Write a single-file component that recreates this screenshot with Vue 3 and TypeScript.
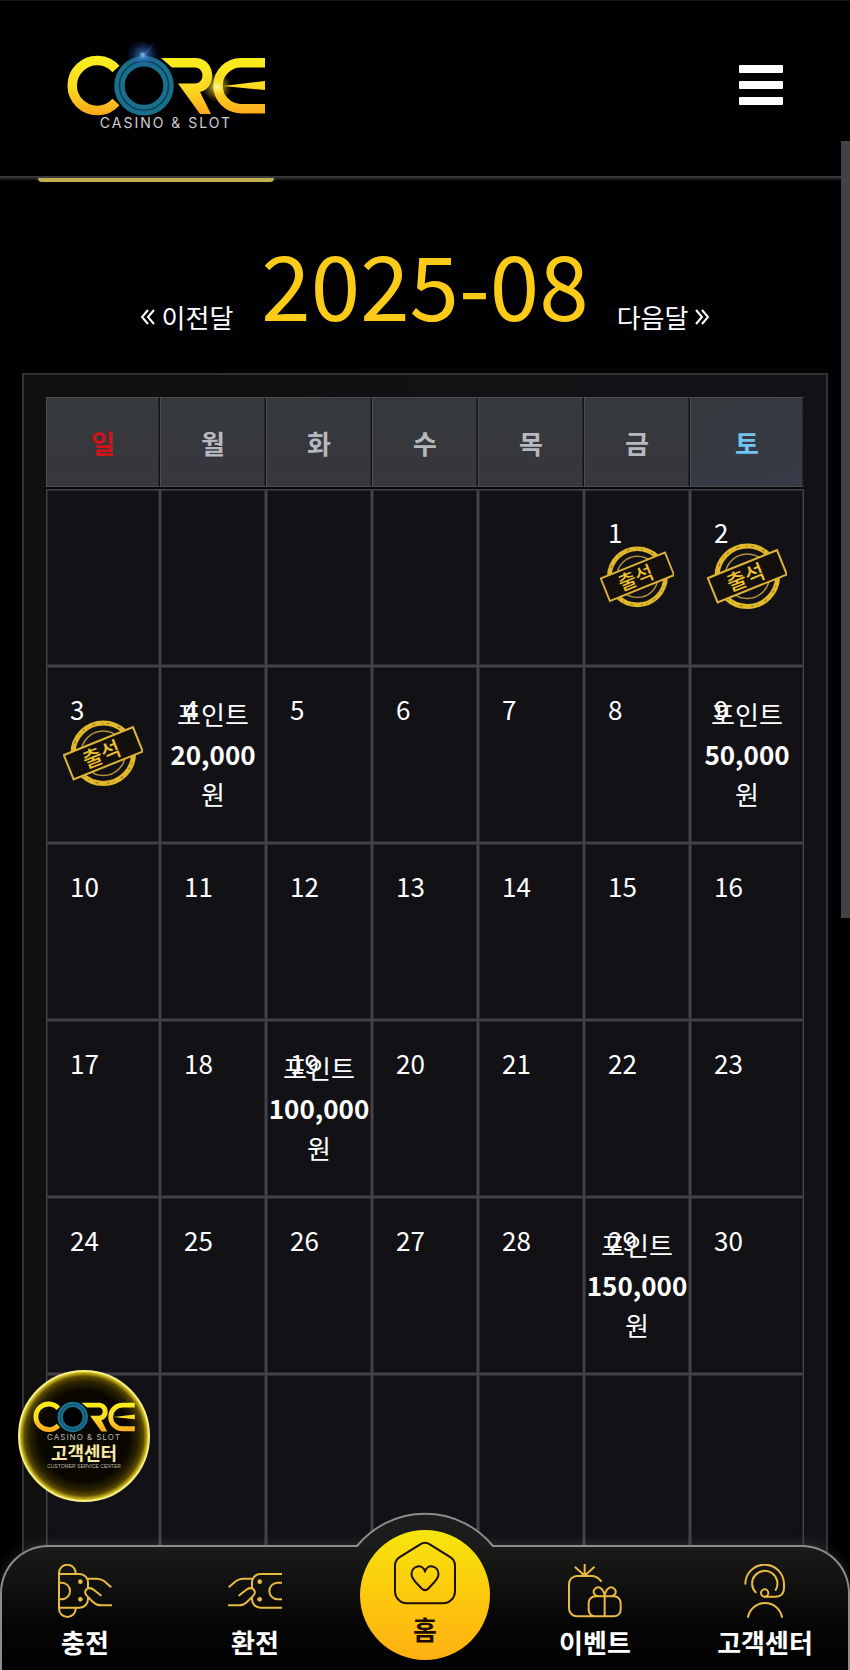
<script setup lang="ts">
interface Day {
  label: string
  stamped?: boolean
  points?: string
}

const weekdays: string[] = ['일', '월', '화', '수', '목', '금', '토']
const stampedDays: number[] = [1, 2, 3]
const pointDays: Record<number, string> = {
  4: '20,000',
  9: '50,000',
  19: '100,000',
  29: '150,000',
}

const firstWeekday = 5
const lastDay = 30

const weeks: Day[][] = Array.from({ length: 6 }, (_, w) =>
  Array.from({ length: 7 }, (_, d) => {
    const n = w * 7 + d - firstWeekday + 1
    if (n < 1 || n > lastDay) return { label: '' }
    return { label: String(n), stamped: stampedDays.includes(n), points: pointDays[n] }
  }),
)
</script>

<template>
  <div class="page">
    <svg class="defs" aria-hidden="true">
      <defs>
        <linearGradient id="gold" x1="0" y1="16" x2="0" y2="74" gradientUnits="userSpaceOnUse">
          <stop offset="0" stop-color="#f9ee1c" />
          <stop offset="0.5" stop-color="#fbdc22" />
          <stop offset="1" stop-color="#fda81c" />
        </linearGradient>
        <radialGradient id="flare">
          <stop offset="0" stop-color="#9fe4ff" />
          <stop offset="0.25" stop-color="#3f7fd0" stop-opacity="0.6" />
          <stop offset="1" stop-color="#143a90" stop-opacity="0" />
        </radialGradient>
        <radialGradient id="spark">
          <stop offset="0" stop-color="#fffbb0" />
          <stop offset="0.4" stop-color="#ffe83a" stop-opacity="0.5" />
          <stop offset="1" stop-color="#d8a800" stop-opacity="0" />
        </radialGradient>
        <symbol id="core-mark" viewBox="0 0 200 76">
          <path d="M50 28A25 25 0 1 0 50 61" fill="none" stroke="url(#gold)" stroke-width="9.500" />
          <path d="M95 17H129C150 17 152 47 134 51L145 73H134L112 42.500H129C139 42.500 139 26.500 129 26.500H106z" fill="url(#gold)" />
          <path d="M199 21.700H175a23 23 0 0 0 0 46H199" fill="none" stroke="url(#gold)" stroke-width="9.500" />
          <path d="M157 45L199 40v9z" fill="url(#gold)" />
          <circle cx="78" cy="44.700" r="31.500" fill="#000" />
          <circle cx="78" cy="44.700" r="24.500" fill="none" stroke="#196f8c" stroke-width="10.500" />
          <circle cx="78" cy="44.700" r="24.500" fill="none" stroke="#0b3f58" stroke-width="1.500" />
        </symbol>
        <symbol id="stamp" viewBox="0 0 80 68">
          <g fill="none" stroke="#e2b82b">
            <circle cx="40" cy="34" r="30" stroke-width="5" />
            <circle cx="40" cy="34" r="30" stroke="#80641a" stroke-width="1" stroke-dasharray="3 7 1 4 2 9" />
            <circle cx="40" cy="34" r="22" stroke-width="1.500" stroke="#b3923a" />
          </g>
          <g transform="rotate(-22 40 34)">
            <rect x="3" y="21" width="74" height="26" fill="#120f0c" stroke="#dcb23a" stroke-width="2" />
            <text x="38" y="42" text-anchor="middle" font-size="21" font-weight="500" fill="#efc22e">출석</text>
          </g>
        </symbol>
      </defs>
    </svg>

    <header class="header">
      <a class="logo" href="#">
        <svg class="logo-mark" viewBox="0 0 200 76" aria-hidden="true">
          <use href="#core-mark" />
          <ellipse cx="77" cy="14" rx="17" ry="15" fill="url(#flare)" />
          <path d="M76 15L89 0L79 16z" fill="#3f66c8" opacity="0.4" />
          <circle cx="151" cy="46" r="15" fill="url(#spark)" />
        </svg>
        <span class="logo-sub">CASINO &amp; SLOT</span>
      </a>
      <button class="menu" type="button" aria-label="메뉴">
        <span></span><span></span><span></span>
      </button>
    </header>

    <main class="content">
      <div class="tab-edge"></div>

      <div class="month">
        <a class="month-link" href="#">
          <svg viewBox="0 0 16 18" aria-hidden="true"><path d="M8 2L2 9l6 7M14 2L8 9l6 7" /></svg>
          이전달
        </a>
        <h1>2025-08</h1>
        <a class="month-link" href="#">
          다음달
          <svg viewBox="0 0 16 18" aria-hidden="true"><path d="M2 2l6 7l-6 7M8 2l6 7l-6 7" /></svg>
        </a>
      </div>

      <section class="frame">
        <table class="calendar">
          <colgroup>
            <col class="col-edge" />
            <col v-for="i in 5" :key="i" />
            <col class="col-edge" />
          </colgroup>
          <thead>
            <tr>
              <th v-for="w in weekdays" :key="w" scope="col">{{ w }}</th>
            </tr>
          </thead>
          <tbody>
            <tr v-for="(week, i) in weeks" :key="i">
              <td v-for="(day, j) in week" :key="j">
                <span class="num">{{ day.label }}</span>
                <div v-if="day.stamped" class="over">
                  <svg class="stamp" viewBox="0 0 80 68"><use href="#stamp" /></svg>
                </div>
                <div v-else-if="day.points" class="over">
                  <span>포인트</span>
                  <strong>{{ day.points }}</strong>
                  <span>원</span>
                </div>
              </td>
            </tr>
          </tbody>
        </table>
      </section>
    </main>

    <div class="scroll-thumb"></div>

    <a class="support" href="#">
      <svg class="support-mark" viewBox="0 0 200 76" aria-hidden="true"><use href="#core-mark" /></svg>
      <span class="support-sub">CASINO &amp; SLOT</span>
      <strong>고객센터</strong>
      <small>CUSTOMER SERVICE CENTER</small>
    </a>

    <nav class="bottom">
      <svg class="bump" viewBox="0 0 140 36" aria-hidden="true">
        <path class="bump-fill" d="M0 36L2 34A88 88 0 0 1 138 34L140 36z" />
        <path class="bump-line" d="M0 34h2A88 88 0 0 1 138 34h2" />
      </svg>
      <a href="#">
        <svg class="icon" viewBox="0 0 162 162" aria-hidden="true">
          <path d="M53 30V27a25 25 0 0 0-50 0V134a25 25 0 0 0 50 0V131M3 30H65a25 25 0 0 1 25 25V72M3 131H65a25 25 0 0 0 25-25V100M5 56h6a25 25 0 0 1 0 50H5M88 44h30q10 0 20 7l20 17M128 94L105 76q-9-6-17-2q-12 9-2 21l19 19q10 10 25 10h30" />
          <circle class="dot" cx="67" cy="53" r="7" /><circle class="dot" cx="67" cy="106" r="7" />
        </svg>
        <span>충전</span>
      </a>
      <a href="#">
        <svg class="icon" viewBox="0 0 162 162" aria-hidden="true">
          <g transform="translate(162 0) scale(-1 1)">
            <path d="M1 30H65a25 25 0 0 1 25 25V72M1 131H65a25 25 0 0 0 25-25V100M1 56h12a25 25 0 0 1 0 50H1M88 44h30q10 0 20 7l20 17M128 94L105 76q-9-6-17-2q-12 9-2 21l19 19q10 10 25 10h30" />
            <circle class="dot" cx="67" cy="53" r="7" /><circle class="dot" cx="67" cy="106" r="7" />
          </g>
        </svg>
        <span>환전</span>
      </a>
      <a class="home" href="#">
        <svg viewBox="0 0 184 188" aria-hidden="true">
          <path d="M79 8Q92 0 105 8L167 47Q181 56 181 72V148a36 36 0 0 1-36 36H39a36 36 0 0 1-36-36V72Q3 56 17 47zM92 90C86 66 52 70 52 98C52 114 68 124 82 140Q92 150 102 140C116 124 132 114 132 98C132 70 98 66 92 90z" />
        </svg>
        <span>홈</span>
      </a>
      <a href="#">
        <svg class="icon" viewBox="0 0 162 162" aria-hidden="true">
          <path d="M50 35V2M50 35L22 10M50 35L78 10M99 51Q86 36 72 36H27a24 24 0 0 0-24 24V133a24 24 0 0 0 24 24H82M82 97H138a20 20 0 0 1 20 20V137a20 20 0 0 1-20 20H82a20 20 0 0 1-20-20V117a20 20 0 0 1 20-20zM110 97V157M110 97H92C78 96 74 84 79 77C88 63 107 70 110 97zM110 97H128C142 96 146 84 141 77C132 63 113 70 110 97z" />
        </svg>
        <span>이벤트</span>
      </a>
      <a href="#">
        <svg class="icon" viewBox="0 0 162 162" aria-hidden="true">
          <path d="M22 59A58 58 0 0 1 138 61V72Q138 98 112 98H80M53 85A38 38 0 1 1 113 78M30 159A52 52 0 0 1 132 159" />
          <circle cx="80" cy="87" r="11" />
        </svg>
        <span>고객센터</span>
      </a>
    </nav>
  </div>
</template>

<style>
body {
  background: #010104;
}
</style>

<style scoped>
.page {
  position: relative;
  display: flex;
  flex-direction: column;
  height: 100vh;
  overflow: hidden;
  background: #010104;
  color: #fff;
  font-family: "Noto Sans CJK KR", sans-serif;
  font-size: 26px;
}
.page * {
  box-sizing: border-box;
}
a {
  color: inherit;
  text-decoration: none;
}
.defs {
  position: absolute;
  width: 0;
  height: 0;
}

.header {
  display: flex;
  flex: none;
  align-items: flex-start;
  justify-content: space-between;
  height: 178px;
  padding: 40px 67px 0 66px;
  background: #000002;
  border-top: 1px solid #151515;
  border-bottom: 2px solid #39393b;
}
.logo {
  display: flex;
  flex-direction: column;
  align-items: center;
  width: 200px;
}
.logo-mark {
  width: 200px;
  height: 76px;
}
.logo-sub {
  font-family: Inter, sans-serif;
  font-size: 14px;
  letter-spacing: 2px;
  line-height: 12px;
  color: #cfcfcf;
}
.menu {
  display: flex;
  flex-direction: column;
  gap: 8px;
  width: 44px;
  margin-top: 24px;
  padding: 0;
  background: none;
  border: 0;
}
.menu span {
  height: 8px;
  background: #fff;
  border-radius: 1px;
}

.content {
  flex: 1;
  min-height: 0;
  overflow: hidden;
  background: linear-gradient(#1b1b1d 2px, transparent 2px);
}
.tab-edge {
  width: 236px;
  height: 4px;
  margin-left: 38px;
  background: #c2ad50;
  border-radius: 0 0 8px 8px;
}
.month {
  display: flex;
  align-items: flex-end;
  justify-content: center;
  gap: 28px;
  height: 151px;
}
.month h1 {
  margin: 0 0 6px;
  color: #fbcb18;
  font-size: 89px;
  font-weight: 400;
  line-height: 88px;
}
.month-link {
  display: flex;
  align-items: center;
  gap: 6px;
  line-height: 32px;
}
.month-link svg {
  width: 16px;
  height: 18px;
  fill: none;
  stroke: #fff;
  stroke-width: 2;
}

.frame {
  margin: 40px 22px 0;
  padding: 22px;
  background: linear-gradient(90deg, #101010, #131116);
  border: 2px solid #323234;
}
.calendar {
  width: 100%;
  table-layout: fixed;
  border-collapse: separate;
  border-spacing: 0;
}
.col-edge {
  width: 114px;
}
th {
  height: 90px;
  padding: 2px 0 0;
  color: #b6babf;
  font-weight: 700;
  line-height: 40px;
  background: linear-gradient(#35393c, #37373d);
  border: 1px solid #4c4e51;
  border-right-color: #151518;
  border-bottom-color: #4c4e51;
  box-shadow: inset -1px 0 #222427;
}
th:first-child {
  color: #d01419;
}
th:last-child {
  color: #73c4f0;
  background: linear-gradient(160deg, #35393c, #363b48);
}
thead tr {
  box-shadow: 0 2px #08080a;
}
tbody::before {
  content: "";
  display: block;
  height: 2px;
}
td {
  position: relative;
  height: 177px;
  padding: 22px 23px 0;
  vertical-align: top;
  background: #121116;
  border: 1px solid #424146;
  box-shadow: inset 0 0 0 1px #2a292e;
}
.num {
  display: block;
  line-height: 40px;
}
.over {
  position: absolute;
  inset: 0;
  display: flex;
  flex-direction: column;
  align-items: center;
  justify-content: center;
  padding-bottom: 2px;
  line-height: 40px;
}
.stamp {
  width: 72%;
}

.scroll-thumb {
  position: absolute;
  top: 141px;
  right: 0;
  width: 9px;
  height: 777px;
  background: #434146;
}

.support {
  position: absolute;
  bottom: 168px;
  left: 18px;
  display: flex;
  flex-direction: column;
  align-items: center;
  width: 132px;
  height: 132px;
  padding-top: 22px;
  background: radial-gradient(circle, #0a0700 50%, #2a2200 60%, #5c4c00 66%, #c9b820 70%);
  border: 2px solid #f8ef86;
  border-radius: 50%;
}
.support-mark {
  flex: none;
  width: 104px;
  height: 39px;
}
.support-sub {
  color: #b9b9b9;
  font-family: Inter, sans-serif;
  font-size: 8px;
  letter-spacing: 1px;
  line-height: 8px;
}
.support strong {
  color: #f6e7a6;
  font-size: 18px;
  line-height: 22px;
}
.support small {
  color: #bdb9ac;
  font-family: "Liberation Sans", sans-serif;
  font-size: 5px;
  line-height: 6px;
  white-space: nowrap;
}

.bottom {
  position: absolute;
  right: 0;
  bottom: -2px;
  left: 0;
  display: grid;
  grid-template-columns: repeat(5, 1fr);
  height: 127px;
  background: linear-gradient(#1b1c1a, #060606 60%, #010103);
  border-radius: 48px 48px 0 0;
  box-shadow: inset 0 0 0 2px #8b8c8b, 0 0 14px rgba(120, 120, 120, 0.3);
}
.bottom a {
  display: flex;
  flex-direction: column;
  align-items: center;
  padding-top: 19px;
  font-weight: 700;
}
.bottom span {
  line-height: 40px;
}
.bump {
  position: absolute;
  top: -33px;
  left: 50%;
  width: 140px;
  height: 36px;
  margin-left: -70px;
  overflow: visible;
}
.bump-fill {
  fill: #1c1c1d;
}
.bump-line {
  fill: none;
  stroke: #8b8c8b;
  stroke-width: 2;
}
.icon {
  width: 54px;
  height: 54px;
  margin-bottom: 4px;
  fill: none;
  stroke: #e8bb42;
  stroke-width: 6;
  stroke-linecap: round;
  stroke-linejoin: round;
}
.icon .dot {
  fill: #e8bb42;
  stroke: none;
}
.bottom .home {
  position: relative;
  justify-self: center;
  width: 130px;
  height: 130px;
  margin-top: -15px;
  padding-top: 11px;
  color: #1c0c06;
  background: linear-gradient(#f5e60c, #fdc60c 55%, #ffb012);
  border-radius: 50%;
}
.home svg {
  width: 62px;
  height: 64px;
  margin-bottom: 4px;
  fill: none;
  stroke: #1c1008;
  stroke-width: 6;
  stroke-linejoin: round;
}
</style>
